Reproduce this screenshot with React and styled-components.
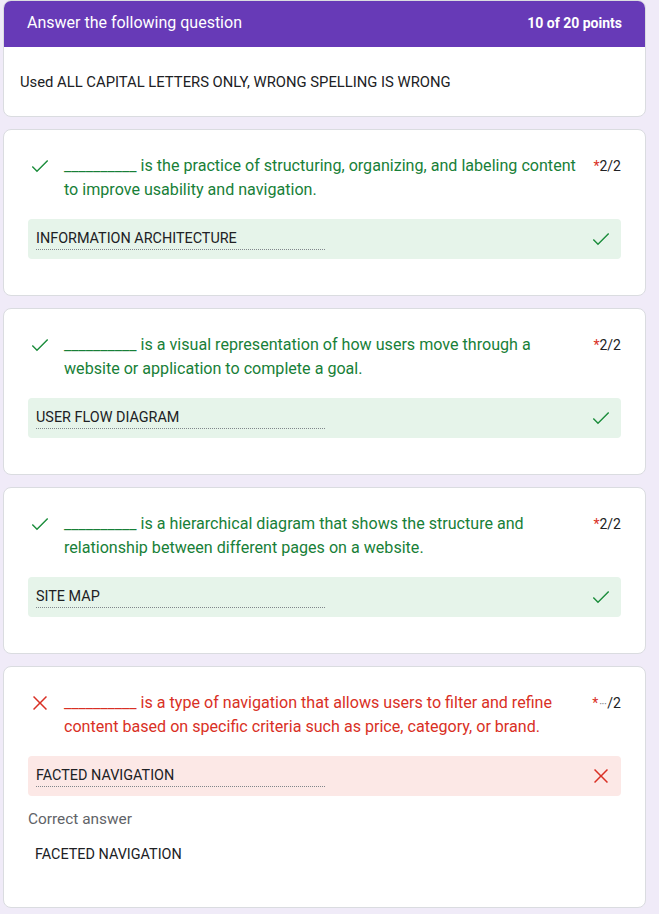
import styled, { createGlobalStyle } from "styled-components";

const GlobalStyle = createGlobalStyle`
  body {
    margin: 0;
    background: #f0ebf8;
    font-family: Roboto, "Liberation Sans", Arial, sans-serif;
  }
`;

const questions = [
  {
    id: 1,
    text: "is the practice of structuring, organizing, and labeling content to improve usability and navigation.",
    answer: "INFORMATION ARCHITECTURE",
    correct: true,
  },
  {
    id: 2,
    text: "is a visual representation of how users move through a website or application to complete a goal.",
    answer: "USER FLOW DIAGRAM",
    correct: true,
  },
  {
    id: 3,
    text: "is a hierarchical diagram that shows the structure and relationship between different pages on a website.",
    answer: "SITE MAP",
    correct: true,
  },
  {
    id: 4,
    text: "is a type of navigation that allows users to filter and refine content based on specific criteria such as price, category, or brand.",
    answer: "FACTED NAVIGATION",
    correct: false,
    correctAnswer: "FACETED NAVIGATION",
  },
];

const Page = styled.div`
  width: 643px;
  padding: 0 13px 6px 3px;
  display: flex;
  flex-direction: column;
  gap: 12px;
`;

const Card = styled.div`
  background: #fff;
  border: 1px solid #dadce0;
  border-radius: 8px;
  overflow: hidden;
`;

const HeaderBar = styled.div`
  height: 47px;
  margin: -1px -1px 0;
  background: #673ab7;
  color: #fff;
  display: flex;
  align-items: center;
  justify-content: space-between;
  padding: 0 24px 2px;
  box-sizing: border-box;
`;

const HeaderTitle = styled.div`
  font-size: 16px;
`;

const HeaderScore = styled.div`
  font-size: 14px;
  font-weight: 700;
`;

const Description = styled.div`
  height: 69px;
  display: flex;
  align-items: center;
  padding: 0 16px;
  font-size: 14.8px;
  color: #202124;
`;

const QuestionBody = styled.div`
  padding: 24px 24px ${(p) => (p.$wrong ? "30px" : "36px")};
`;

const QuestionRow = styled.div`
  display: flex;
  align-items: flex-start;
`;

const StatusIcon = styled.div`
  width: 24px;
  height: 24px;
  flex: none;
  margin-right: 12px;
  color: ${(p) => (p.$wrong ? "#d93025" : "#1e8e3e")};
  svg {
    display: block;
  }
`;

const QuestionText = styled.div`
  flex: 1;
  font-size: 16.1px;
  line-height: 24px;
  color: ${(p) => (p.$wrong ? "#d93025" : "#188038")};
`;

const Points = styled.div`
  flex: none;
  margin-left: 12px;
  font-size: 14px;
  line-height: 24px;
  color: #202124;
`;

const Star = styled.span`
  color: #d93025;
`;

const Dots = styled.span`
  color: #70757a;
  font-size: 11px;
  letter-spacing: -0.5px;
  margin: 0 1px;
`;

const AnswerBox = styled.div`
  margin-top: 17px;
  height: 40px;
  border-radius: 4px;
  background: ${(p) => (p.$wrong ? "#fce8e6" : "#e6f4ea")};
  display: flex;
  align-items: center;
  justify-content: space-between;
  padding: 0 8px;
`;

const AnswerField = styled.div`
  width: 289px;
  margin-top: 1px;
  font-size: 14.4px;
  line-height: 20px;
  color: #202124;
  border-bottom: 1px dotted #80868b;
`;

const AnswerIcon = styled.div`
  width: 24px;
  height: 24px;
  color: ${(p) => (p.$wrong ? "#d93025" : "#1e8e3e")};
  svg {
    display: block;
  }
`;

const CorrectLabel = styled.div`
  margin-top: 13px;
  font-size: 15.4px;
  line-height: 20px;
  color: #5f6368;
`;

const CorrectList = styled.div`
  margin-top: 4px;
  padding: 12px 7px;
  font-size: 14.4px;
  line-height: 20px;
  color: #202124;
`;

const CheckSvg = () => (
  <svg width="24" height="24" viewBox="0 0 24 24" fill="currentColor">
    <path d="M9 16.17L4.83 12l-1.06 1.06L9 18.29 20.23 7.06l-1.06-1.06z" />
  </svg>
);

const CrossSvg = () => (
  <svg width="24" height="24" viewBox="0 0 24 24" fill="currentColor">
    <path d="M19 6.06L17.94 5 12 10.94 6.06 5 5 6.06 10.94 12 5 17.94 6.06 19 12 13.06 17.94 19 19 17.94 13.06 12z" />
  </svg>
);

const Question = ({ q }) => {
  const wrong = !q.correct;
  return (
    <Card>
      <QuestionBody $wrong={wrong}>
        <QuestionRow>
          <StatusIcon $wrong={wrong}>{wrong ? <CrossSvg /> : <CheckSvg />}</StatusIcon>
          <QuestionText $wrong={wrong}>
            __________ {q.text}
          </QuestionText>
          <Points>
            <Star>*</Star>
            {wrong ? <Dots>···</Dots> : "2"}/2
          </Points>
        </QuestionRow>
        <AnswerBox $wrong={wrong}>
          <AnswerField>{q.answer}</AnswerField>
          <AnswerIcon $wrong={wrong}>{wrong ? <CrossSvg /> : <CheckSvg />}</AnswerIcon>
        </AnswerBox>
        {wrong && (
          <>
            <CorrectLabel>Correct answer</CorrectLabel>
            <CorrectList>{q.correctAnswer}</CorrectList>
          </>
        )}
      </QuestionBody>
    </Card>
  );
};

export default function App() {
  return (
    <>
      <GlobalStyle />
      <Page>
        <Card>
          <HeaderBar>
            <HeaderTitle>Answer the following question</HeaderTitle>
            <HeaderScore>10 of 20 points</HeaderScore>
          </HeaderBar>
          <Description>Used ALL CAPITAL LETTERS ONLY, WRONG SPELLING IS WRONG</Description>
        </Card>
        {questions.map((q) => (
          <Question key={q.id} q={q} />
        ))}
      </Page>
    </>
  );
}
